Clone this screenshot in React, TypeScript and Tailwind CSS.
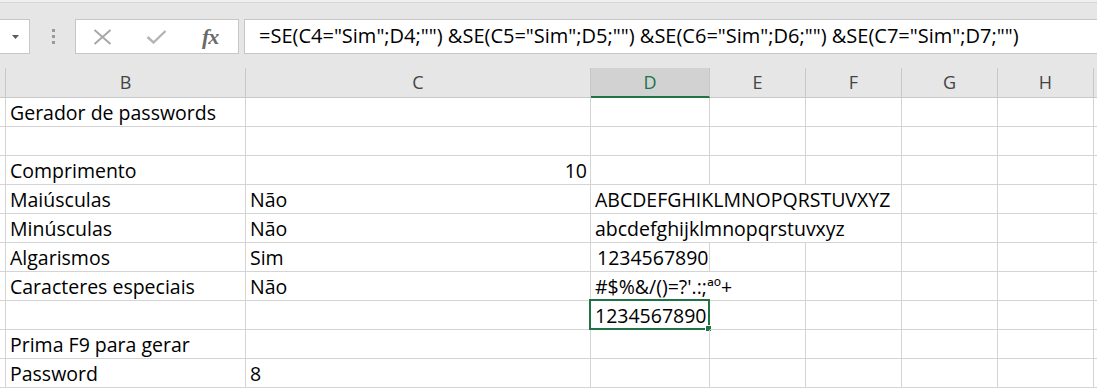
import React from "react";

type Cell = { text?: string; span?: number; right?: boolean; pad?: string };

const rows: Cell[][] = [
  [{ text: "Gerador de passwords" }, {}, {}, {}, {}, {}, {}],
  [{}, {}, {}, {}, {}, {}, {}],
  [{ text: "Comprimento" }, { text: "10", right: true }, {}, {}, {}, {}, {}],
  [{ text: "Maiúsculas" }, { text: "Não" }, { text: "ABCDEFGHIKLMNOPQRSTUVXYZ", span: 3 }, {}, {}],
  [{ text: "Minúsculas" }, { text: "Não" }, { text: "abcdefghijklmnopqrstuvxyz", span: 3 }, {}, {}],
  [{ text: "Algarismos" }, { text: "Sim" }, { text: "1234567890", pad: "pl-[6px]" }, {}, {}, {}, {}],
  [{ text: "Caracteres especiais" }, { text: "Não" }, { text: "#$%&/()=?'.:;ªº+", span: 2 }, {}, {}, {}],
  [{}, {}, { text: "1234567890" }, {}, {}, {}, {}],
  [{ text: "Prima F9 para gerar" }, {}, {}, {}, {}, {}, {}],
  [{ text: "Password" }, { text: "8" }, {}, {}, {}, {}, {}],
];

const headers = ["B", "C", "D", "E", "F", "G", "H"];

const spanClass: Record<number, string> = { 1: "col-span-1", 2: "col-span-2", 3: "col-span-3" };

function Toolbar() {
  return (
    <div className="h-[68px] bg-[#e6e6e6] relative">
      <div className="h-[3px] bg-[#f0f0f0] border-b border-[#d6d6d6]" />
      <div className="flex items-start pt-[16px]">
        {/* name box, cut at the left */}
        <div className="w-[30px] h-[35px] bg-white border border-l-0 border-[#c6c6c6] flex items-center justify-end pr-[10px]">
          <svg width="7" height="4" viewBox="0 0 7 4">
            <path d="M0 0 L7 0 L3.5 4 Z" fill="#5a5a5a" />
          </svg>
        </div>
        <div className="w-[45px] h-[35px] flex flex-col items-center justify-center gap-[3px] pl-[1px]">
          <div className="w-[3px] h-[3px] bg-[#9a9a9a]" />
          <div className="w-[3px] h-[3px] bg-[#9a9a9a]" />
          <div className="w-[3px] h-[3px] bg-[#9a9a9a]" />
        </div>
        <div className="w-[164px] h-[35px] bg-white border border-[#c6c6c6] flex items-center">
          <svg className="ml-[17px]" width="19" height="16" viewBox="0 0 19 16">
            <path d="M1.5 1 L17.5 15 M17.5 1 L1.5 15" stroke="#a8a8a8" strokeWidth="2" fill="none" />
          </svg>
          <svg className="ml-[34px]" width="21" height="14" viewBox="0 0 21 14">
            <path d="M1.5 7 L7.5 12.5 L19.5 1" stroke="#b4b4b4" strokeWidth="2.4" fill="none" />
          </svg>
          <span className="ml-[35px] font-['Liberation_Serif',serif] italic font-bold text-[22px] leading-none text-[#6a6a6a] tracking-[-1px]">
            fx
          </span>
        </div>
        <div className="ml-[5px] flex-1 h-[35px] bg-white border border-r-0 border-[#c6c6c6] flex items-center pl-[14px] pb-[2px] text-[20px] text-black whitespace-nowrap">
          =SE(C4="Sim";D4;"") &amp;SE(C5="Sim";D5;"") &amp;SE(C6="Sim";D6;"") &amp;SE(C7="Sim";D7;"")
        </div>
      </div>
    </div>
  );
}

export default function App() {
  return (
    <div className="w-[1097px] h-[388px] overflow-hidden bg-white font-['Open_Sans','Liberation_Sans',sans-serif]">
      <Toolbar />
      <div className="grid grid-cols-[6px_240px_345px_119px_96px_96px_96px_96px_1fr]">
        {/* column headers */}
        <div className="h-[30px] bg-[#e6e6e6] border-r border-b border-[#c8c8c8]" />
        {headers.map((h) => (
          <div
            key={h}
            className={
              h === "D"
                ? "h-[30px] bg-[#d2d2d2] border-r border-[#c8c8c8] border-b-[2px] border-b-[#217346] flex items-center justify-center text-[18px] text-[#217346]"
                : "h-[30px] bg-[#e6e6e6] border-r border-b border-[#c8c8c8] flex items-center justify-center text-[18px] text-[#444]"
            }
          >
            {h}
          </div>
        ))}
        <div className="h-[30px] bg-[#e6e6e6] border-b border-[#c8c8c8]" />

        {rows.map((row, r) => (
          <React.Fragment key={r}>
            <div className="h-[29px] border-r border-b border-[#d4d4d4]" />
            {row.map((c, i) => (
              <div
                key={i}
                className={`relative h-[29px] border-r border-b border-[#d4d4d4] flex items-end text-[19.5px] leading-[26px] text-black whitespace-nowrap ${
                  spanClass[c.span ?? 1]
                } ${c.right ? "justify-end pr-[3px]" : c.pad ?? "pl-[4px]"}`}
              >
                {c.text}
                {r === 7 && i === 2 && (
                  <div className="absolute left-[-2px] top-[-2px] w-[121px] h-[31px] border-2 border-[#217346]">
                    <div className="absolute right-[-4px] bottom-[-4px] w-[7px] h-[7px] bg-[#217346] border border-white" />
                  </div>
                )}
              </div>
            ))}
            <div className="h-[29px] border-b border-[#d4d4d4]" />
          </React.Fragment>
        ))}
      </div>
    </div>
  );
}
